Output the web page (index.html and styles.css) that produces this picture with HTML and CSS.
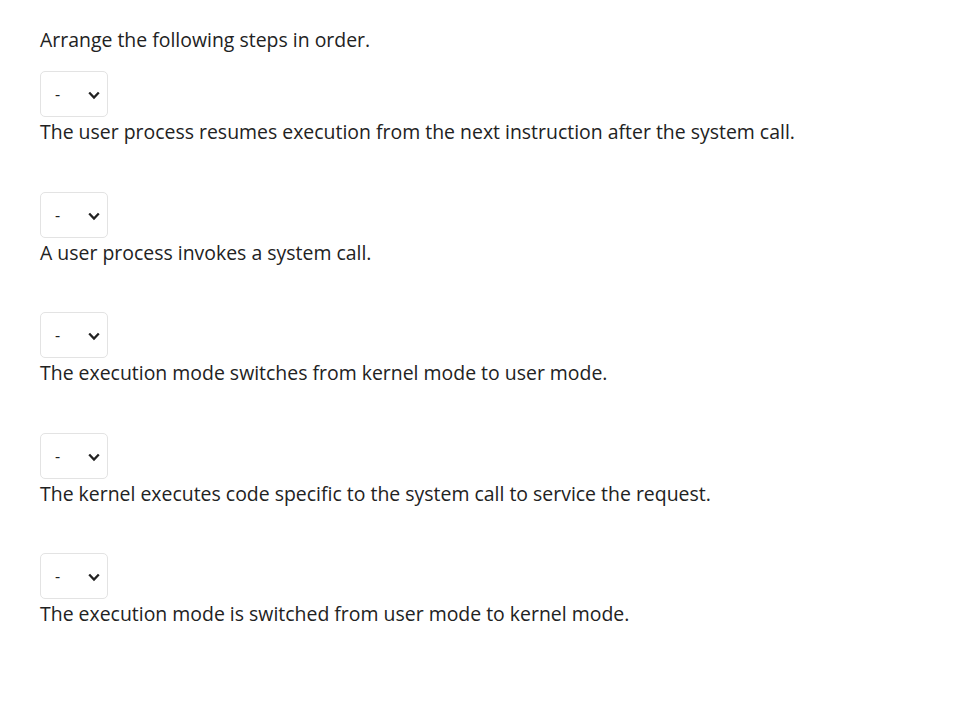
FILE: index.html
```html
<!DOCTYPE html>
<html>
<head lang="en">
    <meta charset="UTF-8">
    <title>Arrange the steps</title>
    <link rel="stylesheet" href="styles.css">
</head>
<body>

<div class="question">
    <p class="question-title">Arrange the following steps in order.</p>

    <div class="step">
        <select class="step-select" name="step1">
            <option>-</option>
            <option>1</option><option>2</option><option>3</option><option>4</option><option>5</option>
        </select>
        <p class="step-text">The user process resumes execution from the next instruction after the system call.</p>
    </div>

    <div class="step">
        <select class="step-select" name="step2">
            <option>-</option>
            <option>1</option><option>2</option><option>3</option><option>4</option><option>5</option>
        </select>
        <p class="step-text">A user process invokes a system call.</p>
    </div>

    <div class="step">
        <select class="step-select" name="step3">
            <option>-</option>
            <option>1</option><option>2</option><option>3</option><option>4</option><option>5</option>
        </select>
        <p class="step-text">The execution mode switches from kernel mode to user mode.</p>
    </div>

    <div class="step">
        <select class="step-select" name="step4">
            <option>-</option>
            <option>1</option><option>2</option><option>3</option><option>4</option><option>5</option>
        </select>
        <p class="step-text">The kernel executes code specific to the system call to service the request.</p>
    </div>

    <div class="step">
        <select class="step-select" name="step5">
            <option>-</option>
            <option>1</option><option>2</option><option>3</option><option>4</option><option>5</option>
        </select>
        <p class="step-text">The execution mode is switched from user mode to kernel mode.</p>
    </div>
</div>

</body>
</html>
```

FILE: styles.css
```css
html, body, div, p {
    padding: 0px;
    margin: 0px;
}

body {
    background: #ffffff;
    color: #222222;
    font-family: "Open Sans", "Liberation Sans", sans-serif;
    font-size: 19.45px;
    line-height: 27px;
}

.question {
    padding: 26px 40px 0px 40px;
}

.question-title {
    margin-bottom: 18px;
}

.step {
    display: flex;
    flex-direction: column;
    align-items: flex-start;
    margin-bottom: 46.5px;
}

/* select with its own chevron instead of the native arrow */
.step-select {
    -webkit-appearance: none;
    appearance: none;
    width: 68px;
    height: 46px;
    margin: 0px 0px 1px 0px;
    padding: 0px 0px 0px 14px;
    border: #e3e3e3 solid 1px;
    border-radius: 5px;
    background: #ffffff url("data:image/svg+xml,%3Csvg xmlns='http://www.w3.org/2000/svg' width='12' height='9' viewBox='0 0 12 9'%3E%3Cpath d='M1.2 1.5l4.8 5 4.8-5' fill='none' stroke='%23222' stroke-width='2.3'/%3E%3C/svg%3E") no-repeat 47px 19px;
    font-family: "Open Sans", "Liberation Sans", sans-serif;
    font-size: 16px;
    color: #222222;
}
```
